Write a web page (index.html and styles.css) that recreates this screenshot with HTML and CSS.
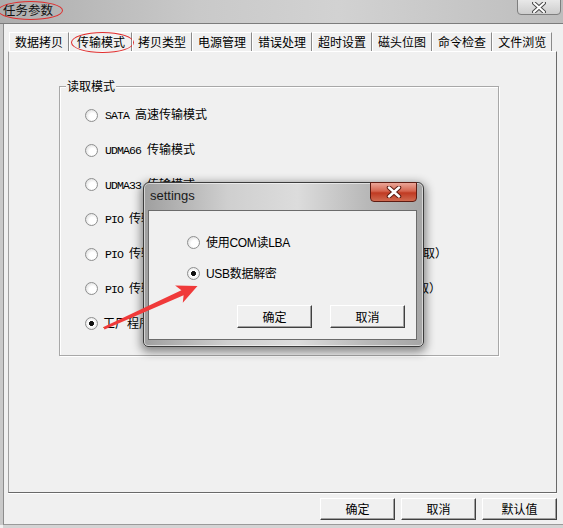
FILE: index.html
```html
<!DOCTYPE html>
<html lang="zh-CN">
<head>
    <meta charset="UTF-8">
    <title>任务参数</title>
    <link rel="stylesheet" href="styles.css">
</head>
<body>
    <div class="window">
        <div class="titlebar">
            <span class="title">任务参数</span>
            <span class="mark mark-title"></span>
            <div class="close-btn">
                <svg width="14" height="11" viewBox="0 0 14 11">
                    <path d="M2 1 L12 10 M12 1 L2 10" stroke="#4a4a4a" stroke-width="4" stroke-linecap="round"/>
                    <path d="M2 1 L12 10 M12 1 L2 10" stroke="#fff" stroke-width="2" stroke-linecap="round"/>
                </svg>
            </div>
        </div>
        <div class="frame">
            <div class="tabs">
                <div class="tab">数据拷贝</div>
                <div class="tab active">传输模式<span class="mark mark-tab"></span></div>
                <div class="tab">拷贝类型</div>
                <div class="tab">电源管理</div>
                <div class="tab">错误处理</div>
                <div class="tab">超时设置</div>
                <div class="tab">磁头位图</div>
                <div class="tab">命令检查</div>
                <div class="tab">文件浏览</div>
            </div>
            <div class="panel">
                <div class="group">
                    <span class="legend">读取模式</span>
                    <div class="opt"><span class="radio"></span><span class="label"><span class="en">SATA </span>高速传输模式</span></div>
                    <div class="opt"><span class="radio"></span><span class="label"><span class="en">UDMA66 </span>传输模式</span></div>
                    <div class="opt"><span class="radio"></span><span class="label"><span class="en">UDMA33 </span>传输模式</span></div>
                    <div class="opt"><span class="radio"></span><span class="label"><span class="en">PIO </span>传输模式</span></div>
                    <div class="opt"><span class="radio"></span><span class="label"><span class="en">PIO </span>传输模式<span class="en"> </span>（兼容老式硬盘，速度较慢，适用于固件区读取）</span></div>
                    <div class="opt"><span class="radio"></span><span class="label"><span class="en">PIO </span>传输模式<span class="en"> </span>（兼容老式硬盘，速度较慢，适用于按<span class="en">LBA</span>读取）</span></div>
                    <div class="opt"><span class="radio checked"></span><span class="label cn">工厂程序模式</span></div>
                </div>
            </div>
            <div class="footer">
                <button class="btn">确定</button>
                <button class="btn">取消</button>
                <button class="btn">默认值</button>
            </div>
        </div>
    </div>

    <div class="dialog">
        <div class="dialog-title">settings</div>
        <div class="dialog-close">
            <svg width="16" height="12" viewBox="0 0 16 12">
                <path d="M3 1.5 L13 10.5 M13 1.5 L3 10.5" stroke="#5a1a10" stroke-width="4.5" stroke-linecap="round"/>
                <path d="M3 1.5 L13 10.5 M13 1.5 L3 10.5" stroke="#fff" stroke-width="2.5" stroke-linecap="round"/>
            </svg>
        </div>
        <div class="dialog-body">
            <div class="dlg-opt"><span class="radio"></span><span class="dlg-label">使用COM读LBA</span></div>
            <div class="dlg-opt"><span class="radio checked"></span><span class="dlg-label">USB数据解密</span></div>
            <div class="dlg-buttons">
                <button class="btn dlg-btn">确定</button>
                <button class="btn dlg-btn">取消</button>
            </div>
        </div>
    </div>

    <!-- red annotation arrow -->
    <svg class="arrow" width="563" height="528" viewBox="0 0 563 528">
        <polygon points="103.5,327 181.4,290.3 175.1,285.5 197.5,286 182.8,302.8 183.6,295.2 104.5,329.5" fill="#f03a3a"/>
    </svg>
</body>
</html>
```

FILE: styles.css
```css
* {
    box-sizing: border-box;
}

body {
    margin: 0;
    width: 563px;
    height: 528px;
    overflow: hidden;
    position: relative;
    background: #f0f0f0;
    font-family: "Noto Sans CJK SC", sans-serif;
    font-size: 12px;
    color: #000;
}

.window {
    height: 528px;
    display: flex;
    flex-direction: column;
}

/* Title bar */
.titlebar {
    position: relative;
    height: 24px;
    flex: none;
    display: flex;
    align-items: center;
    padding-left: 3px;
    padding-bottom: 3px;
    border-bottom: 1px solid #7c7c7c;
    background: linear-gradient(to right, #adadad 0%, #c9c9c9 35%, #d2d2d2 60%, #bdbdbd 100%);
}

.title {
    font-size: 12.5px;
    line-height: 14px;
    color: #111;
}

.mark {
    position: absolute;
    border: 1.5px solid #e02c2c;
    border-radius: 50%;
    pointer-events: none;
}

.mark-title {
    left: -2px;
    top: 1px;
    width: 65px;
    height: 19px;
}

.close-btn {
    position: absolute;
    right: 2px;
    top: -1px;
    width: 44px;
    height: 16px;
    border: 1px solid #7e7e7e;
    border-radius: 0 0 4px 4px;
    background: linear-gradient(#e8e8e8, #cdcdcd);
    display: flex;
    align-items: center;
    justify-content: center;
}

/* Window body */
.frame {
    flex: 1;
    display: flex;
    flex-direction: column;
    margin-left: 3px;
    border-left: 1px solid #8c8c8c;
    border-bottom: 1px solid #9a9a9a;
    margin-bottom: 3px;
    box-shadow: -3px 0 0 #c9c9c9, 0 3px 0 #d4d4d4;
    padding: 8px 6px 0 4px;
}

.tabs {
    display: flex;
    height: 19px;
    margin-left: 1px;
}

.tab {
    position: relative;
    height: 19px;
    line-height: 18px;
    padding: 0 5px;
    border-top: 1px solid #fff;
    border-left: 1px solid #fff;
    border-right: 1px solid #8a8a8a;
    white-space: nowrap;
}

.tab.active {
    padding: 0 6px 0 7px;
}

.mark-tab {
    left: 1px;
    top: -1px;
    width: 63px;
    height: 21px;
}

.panel {
    height: 442px;
    flex: none;
    border: 1px solid;
    border-color: #fff #696969 #696969 #a0a0a0;
    box-shadow: 0 1px 0 #fff;
}

.group {
    position: relative;
    width: 440px;
    height: 270px;
    margin: 34px 0 0 50px;
    border: 1px solid #a8a8a8;
    box-shadow: inset 1px 1px 0 #fff, 1px 1px 0 #fff;
    padding: 11px 0 0 25px;
    display: flex;
    flex-direction: column;
}

.legend {
    position: absolute;
    left: 6px;
    top: -9px;
    padding: 0 1px;
    background: #f0f0f0;
    line-height: 16px;
}

.opt {
    height: 34.7px;
    display: flex;
    align-items: center;
    gap: 7px;
    white-space: nowrap;
}

.label {
    line-height: 16px;
}

.label.cn {
    margin-left: -2px;
}

.en {
    font-family: "Liberation Mono", monospace;
    font-size: 11.5px;
    letter-spacing: -0.9px;
}

.radio {
    flex: none;
    width: 13px;
    height: 13px;
    border-radius: 50%;
    border: 1px solid #8e8f8f;
    background: radial-gradient(circle at 60% 60%, #fff 0 35%, #e6e6e6 70%, #d4d4d4 100%);
}

.radio.checked {
    background: radial-gradient(circle, #111 0 2.2px, #fff 2.8px, #f2f2f2 60%, #d4d4d4 100%);
}

/* Buttons */
.footer {
    display: flex;
    justify-content: flex-end;
    gap: 6px;
    padding-top: 5px;
}

.btn {
    width: 75px;
    height: 22px;
    padding: 0;
    font-family: "Noto Sans CJK SC", sans-serif;
    font-size: 12px;
    line-height: 18px;
    color: #000;
    background: #f0f0f0;
    border: 1px solid;
    border-color: #fff #404040 #404040 #fff;
    box-shadow: inset -1px -1px 0 #a0a0a0;
}

/* settings dialog */
.dialog {
    position: absolute;
    left: 143px;
    top: 182px;
    width: 281px;
    height: 165px;
    display: flex;
    flex-direction: column;
    padding: 0 6px 6px 4px;
    border: 1px solid #3c3c3c;
    border-radius: 6px 6px 5px 5px;
    background: linear-gradient(to right, #9f9f9f 0%, #cfcfcf 30%, #dcdcdc 55%, #b8b8b8 80%, #a6a6a6 100%);
    box-shadow: 0 3px 10px 2px rgba(0, 0, 0, 0.45), inset 0 0 0 1px rgba(255, 255, 255, 0.55);
}

.dialog-title {
    height: 27px;
    flex: none;
    display: flex;
    align-items: center;
    padding: 0 0 2px 2px;
    font-family: "Liberation Sans", sans-serif;
    font-size: 13px;
    color: #1a1a1a;
}

.dialog-close {
    position: absolute;
    right: 6px;
    top: -1px;
    width: 47px;
    height: 20px;
    border: 1px solid #5e1c12;
    border-radius: 0 0 4px 4px;
    background: linear-gradient(#eaa698 0%, #d5654f 45%, #c03a22 55%, #d06a50 100%);
    display: flex;
    align-items: center;
    justify-content: center;
}

.dialog-body {
    flex: 1;
    background: #f0f0f0;
    border: 1px solid #6b6b6b;
    padding: 16px 11px 0 38px;
}

.dlg-opt {
    height: 31px;
    display: flex;
    align-items: center;
    gap: 6px;
}

.dlg-label {
    font-family: "Liberation Sans", "Noto Sans CJK SC", sans-serif;
    font-size: 12px;
    line-height: 16px;
    letter-spacing: -0.3px;
    white-space: nowrap;
}

.dlg-buttons {
    display: flex;
    justify-content: flex-end;
    gap: 18px;
    margin-top: 16px;
}

.dlg-btn {
    height: 23px;
}

.arrow {
    position: absolute;
    left: 0;
    top: 0;
    pointer-events: none;
}
```
